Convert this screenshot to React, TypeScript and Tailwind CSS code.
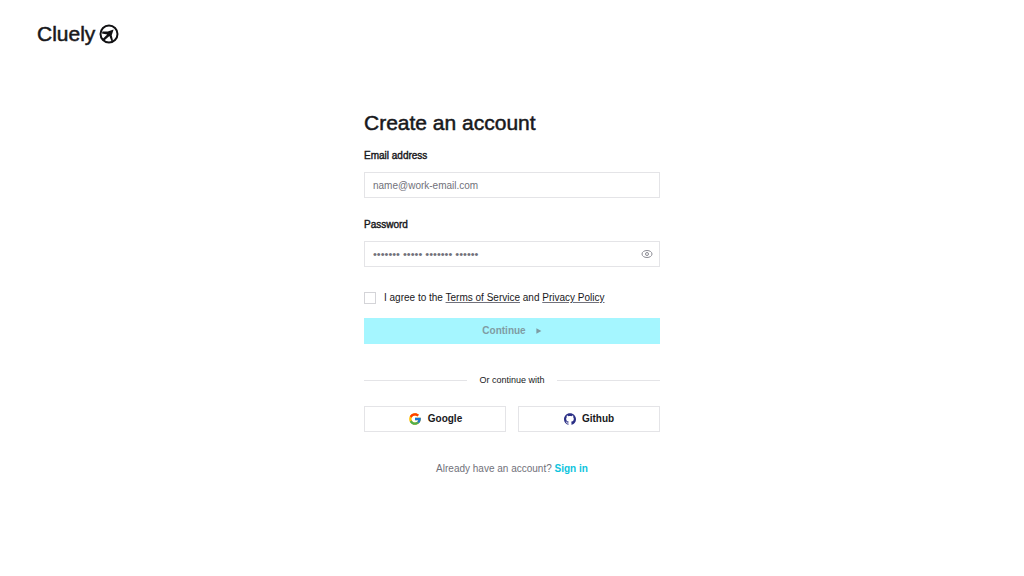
import { useState } from "react";
import { FcGoogle } from "react-icons/fc";
import { SiGithub } from "react-icons/si";

function LogoMark() {
  return (
    <svg viewBox="0 0 20 20" className="size-5" aria-hidden="true">
      <circle cx="10" cy="10" r="8.5" fill="none" stroke="#111113" strokeWidth="2" />
      <path
        d="M14.6 5.4 L12.7 11.2 L14 16.6 L12.6 17.4 L10.4 12 L5 16.8 L3.4 15.2 L8.2 10.4 L3 9.4 L3.4 7.4 L8.8 7.4 Z"
        fill="#111113"
      />
    </svg>
  );
}

function EyeIcon() {
  return (
    <svg viewBox="0 0 12 12" className="size-3" fill="none" stroke="currentColor" strokeWidth="1" aria-hidden="true">
      <path d="M1 6C1 4 3.2 2.5 6 2.5S11 4 11 6 8.8 9.5 6 9.5 1 8 1 6Z" />
      <circle cx="6" cy="6" r="1.5" />
    </svg>
  );
}

const fieldClass =
  "h-[26px] w-full border border-[#e4e4e7] bg-white px-2 text-zinc-900 placeholder:text-[#71717a] focus:border-cyan-400 focus:outline-none";

const socialClass =
  "flex h-[26px] items-center justify-center gap-1.5 border border-[#e4e4e7] bg-white text-[10px] font-bold text-zinc-900";

export default function App() {
  const [visible, setVisible] = useState(false);

  return (
    <div className="min-h-screen bg-white font-['Liberation_Sans',Arial,sans-serif] text-[10px] leading-4 text-zinc-900">
      <header className="px-[37px] pt-5">
        <a href="#" className="inline-flex h-7 items-center gap-1 text-[21px] [-webkit-text-stroke:0.5px]">
          Cluely
          <LogoMark />
        </a>
      </header>

      <main className="mx-auto w-full max-w-[296px] pt-[61px]">
        <h1 className="text-[21px] leading-7 [-webkit-text-stroke:0.5px]">Create an account</h1>

        <form className="mt-[11px]" onSubmit={(event) => event.preventDefault()}>
          <label htmlFor="email" className="block [-webkit-text-stroke:0.4px]">
            Email address
          </label>
          <input
            id="email"
            type="email"
            placeholder="name@work-email.com"
            className={`mt-2 block text-[10px] ${fieldClass}`}
          />

          <label htmlFor="password" className="mt-[19px] block [-webkit-text-stroke:0.4px]">
            Password
          </label>
          <div className="relative mt-2">
            <input
              id="password"
              type={visible ? "text" : "password"}
              placeholder="••••••• ••••• ••••••• ••••••"
              className={`block text-[11px] ${fieldClass} pr-7`}
            />
            <button
              type="button"
              aria-label="Show password"
              onClick={() => setVisible(!visible)}
              className="absolute inset-y-0 right-0 flex w-[26px] items-center justify-center text-[#8b8b94]"
            >
              <EyeIcon />
            </button>
          </div>

          <div className="mt-[23px] flex items-center gap-2">
            <input
              id="terms"
              type="checkbox"
              className="size-3 shrink-0 appearance-none border border-[#d4d4d8] bg-white checked:bg-cyan-400"
            />
            <label htmlFor="terms">
              I agree to the{" "}
              <a href="#" className="underline decoration-zinc-500 underline-offset-1">
                Terms of Service
              </a>{" "}
              and{" "}
              <a href="#" className="underline decoration-zinc-500 underline-offset-1">
                Privacy Policy
              </a>
            </label>
          </div>

          <button
            type="submit"
            disabled
            className="mt-3 flex h-[26px] w-full items-center justify-center gap-2.5 bg-[#a5f6ff] font-bold text-[#7f9ca3]"
          >
            Continue
            <svg viewBox="0 0 6 6" className="size-1.5" fill="currentColor" aria-hidden="true">
              <path d="M0.4 0.2 L5.4 3 L0.4 5.8 Z" />
            </svg>
          </button>
        </form>

        <div className="mt-7 flex items-center gap-3 text-[9px]">
          <span className="h-px flex-1 bg-[#e4e4e7]" />
          <span>Or continue with</span>
          <span className="h-px flex-1 bg-[#e4e4e7]" />
        </div>

        <div className="mt-[18px] grid grid-cols-2 gap-3">
          <button type="button" className={socialClass}>
            <FcGoogle className="size-3.5" />
            Google
          </button>
          <button type="button" className={socialClass}>
            <SiGithub className="size-3 text-[#2b2f86]" />
            Github
          </button>
        </div>

        <p className="mt-[29px] text-center text-[#71717a]">
          Already have an account?{" "}
          <a href="#" className="font-bold text-[#0cc4dd]">
            Sign in
          </a>
        </p>
      </main>
    </div>
  );
}
